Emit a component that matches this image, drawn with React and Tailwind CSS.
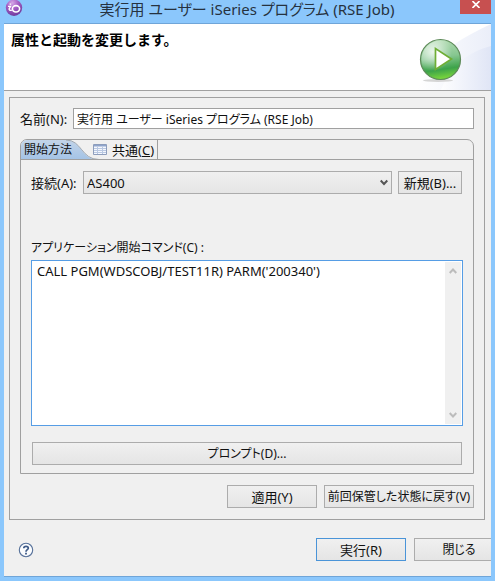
import { useState } from 'react';
import { clsx } from 'clsx';

const PushButton = ({ children, primary, className }) => (
  <button
    type="button"
    className={clsx(
      'h-[23px] shrink-0 border bg-linear-to-b from-[#f0f0f0] to-[#e5e5e5] text-center whitespace-nowrap',
      primary ? 'border-[#4a94d8]' : 'border-[#acacac]',
      className
    )}
  >
    {children}
  </button>
);

const AppIcon = () => (
  <svg className="h-[18px] w-[18px]" viewBox="0 0 18 18" aria-hidden="true">
    <defs>
      <radialGradient id="orb" cx="0.4" cy="0.2" r="0.8">
        <stop offset="0" stopColor="#d3a6e6" />
        <stop offset="0.45" stopColor="#a65fc6" />
        <stop offset="1" stopColor="#6f3a9c" />
      </radialGradient>
    </defs>
    <circle cx="9" cy="7.800" r="8.200" fill="url(#orb)" />
    <ellipse cx="11" cy="8.800" rx="3.600" ry="3.200" fill="none" stroke="#fff" strokeWidth="1.600" />
    <path d="M4.600 4.200h1.600M3 6.300h2.600L4.200 8.600c-.6 1.200 1 2.200 2.600 1.600" fill="none" stroke="#fff" strokeWidth="1.300" />
  </svg>
);

const RunIcon = () => (
  <svg className="h-[46px] w-[46px]" viewBox="0 0 46 46" aria-hidden="true">
    <defs>
      <linearGradient id="ball" x1="0.4" y1="0" x2="0.55" y2="1">
        <stop offset="0" stopColor="#b4dcb4" />
        <stop offset="0.45" stopColor="#86c690" />
        <stop offset="0.75" stopColor="#3da34a" />
        <stop offset="1" stopColor="#7fdc3a" />
      </linearGradient>
      <radialGradient id="shine" cx="0.3" cy="0.3" r="0.5">
        <stop offset="0" stopColor="#fff" stopOpacity="0.8" />
        <stop offset="1" stopColor="#fff" stopOpacity="0" />
      </radialGradient>
    </defs>
    <ellipse cx="20" cy="43.500" rx="15" ry="1.500" fill="#d5d5d5" />
    <circle cx="22.500" cy="22.500" r="20" fill="url(#ball)" stroke="#5f8a5a" strokeWidth="1.200" />
    <circle cx="22.500" cy="22.500" r="19" fill="url(#shine)" />
    <path d="M17.500 11.500v21l16-10.500z" fill="#fff" stroke="#6fae35" strokeWidth="1.700" />
  </svg>
);

const Banner = () => (
  <header className="relative flex h-[67px] items-start justify-between border-b border-[#a0a0a0] bg-white">
    <svg className="absolute right-0 top-0 h-full w-[74px]" viewBox="0 0 74 66" preserveAspectRatio="none" aria-hidden="true">
      <defs>
        <linearGradient id="sweep" x1="0" y1="0" x2="1" y2="0">
          <stop offset="0" stopColor="#fff" />
          <stop offset="1" stopColor="#dde3f5" />
        </linearGradient>
      </defs>
      <path d="M74 0C50 12 20 24 0 66h74z" fill="url(#sweep)" opacity="0.6" />
      <path d="M74 22C52 28 34 40 24 66h50z" fill="url(#sweep)" opacity="0.800" />
    </svg>
    <h1 className="pl-[7px] pt-[6px] text-[14px] leading-5 font-bold text-black [font-feature-settings:normal]">
      属性と起動を変更します。
    </h1>
    <div className="relative pr-[27px] pt-[13px]">
      <RunIcon />
    </div>
  </header>
);

const TabStrip = ({ tab, onSelect }) => (
  <div role="tablist" className="flex h-5 overflow-hidden rounded-t-[6px] border-b border-[#a0a0a0]">
    <div className="relative w-[78px]">
      <svg className="absolute inset-0 h-5 w-full" viewBox="0 0 78 20" aria-hidden="true">
        <defs>
          <linearGradient id="tab" x1="0" y1="0" x2="0" y2="1">
            <stop offset="0" stopColor="#c3d4e8" />
            <stop offset="1" stopColor="#a3c3e6" />
          </linearGradient>
        </defs>
        <path d="M0 20V0h45C61 0 60 20 78 20z" fill="url(#tab)" />
        <path d="M45 0C61 0 60 19.500 78 19.500" fill="none" stroke="#a0a8b0" />
      </svg>
      <button
        type="button"
        role="tab"
        aria-selected={tab === 'start'}
        onClick={() => onSelect('start')}
        className="relative pl-[3px] leading-5"
      >
        開始方法
      </button>
    </div>
    <button
      type="button"
      role="tab"
      aria-selected={tab === 'common'}
      onClick={() => onSelect('common')}
      className="-ml-[6px] flex items-center gap-[5px] border-r border-[#a0a0a0] pr-[3px] text-[13px] leading-5"
    >
      <svg className="h-3 w-[14px]" viewBox="0 0 14 12" aria-hidden="true">
        <path d="M.5.5h13v10H.5z" fill="#f4f7fd" stroke="#8d9dbb" />
        <path d="M1 1h12v1.500H1z" fill="#8fa5cc" />
        <path d="M1 4.500h12M1 6.500h12M1 8.500h12M4.500 3v7M9.500 3v7" stroke="#b9c8e2" />
      </svg>
      <span>
        共通(<u>C</u>)
      </span>
    </button>
  </div>
);

const ScrollRail = () => (
  <div className="m-px flex w-4 flex-col justify-between bg-[#f0f0f0] text-[#bcbcbc]">
    <button type="button" aria-label="上へスクロール" className="flex h-[18px] items-center justify-center">
      <svg className="h-[6px] w-2" viewBox="0 0 8 6">
        <path d="M.7 5L4 1.500 7.300 5" fill="none" stroke="currentColor" strokeWidth="2" />
      </svg>
    </button>
    <button type="button" aria-label="下へスクロール" className="flex h-[18px] items-center justify-center">
      <svg className="h-[6px] w-2" viewBox="0 0 8 6">
        <path d="M.7 1L4 4.500 7.300 1" fill="none" stroke="currentColor" strokeWidth="2" />
      </svg>
    </button>
  </div>
);

const App = () => {
  const [tab, setTab] = useState('start');
  const [name, setName] = useState('実行用 ユーザー iSeries プログラム (RSE Job)');
  const [command, setCommand] = useState("CALL PGM(WDSCOBJ/TEST11R) PARM('200340')");

  return (
    <div className="overflow-hidden bg-[#8bc7fc] px-1 pb-[5px] font-['Noto_Sans','Noto_Sans_CJK_JP',sans-serif] text-[12px] leading-5 text-[#111] [font-feature-settings:'palt']">
      {/* Title bar */}
      <div className="flex h-[23px] items-start justify-between">
        <div className="w-[30px] pl-px">
          <AppIcon />
        </div>
        <div className="text-[15px] leading-[19px] whitespace-nowrap text-[#26323f]">
          実行用 ユーザー iSeries プログラム (RSE Job)
        </div>
        <button type="button" aria-label="閉じる" className="flex h-[14px] w-[31px] items-start justify-center bg-[#c75050] pt-px">
          <svg className="h-[7px] w-2" viewBox="0 0 8 7">
            <path d="M.5 0l7 7M7.500 0l-7 7" stroke="#fff" strokeWidth="1.600" />
          </svg>
        </button>
      </div>

      <div className="overflow-hidden border-t border-b border-[#6fa5d8] bg-[#f0f0f0]">
        <Banner />

        <div className="mr-[6px] ml-[5px] mt-[6px] border border-[#a0a0a0] px-[10px] pt-[10px] pb-[11px]">
          <div className="flex items-center">
            <label htmlFor="name" className="w-[53px] shrink-0 text-[13px] whitespace-nowrap">
              名前(N):
            </label>
            <input
              id="name"
              value={name}
              onChange={(e) => setName(e.target.value)}
              className="h-[21px] min-w-0 flex-1 border border-[#a0a0a0] bg-white px-[3px] outline-none"
            />
          </div>

          <div className="mt-[10px] rounded-t-[7px] border border-[#a0a0a0]">
            <TabStrip tab={tab} onSelect={setTab} />

            <div className="px-[10px] pt-[11px] pb-2">
              <div className="flex items-center">
                <label htmlFor="connection" className="w-[52px] shrink-0 text-[13px] whitespace-nowrap">
                  接続(A):
                </label>
                <div className="relative flex-1">
                  <select
                    id="connection"
                    className="block h-[23px] w-full appearance-none border border-[#acacac] bg-linear-to-b from-[#f0f0f0] to-[#e5e5e5] px-[3px] text-[13px] outline-none"
                  >
                    <option>AS400</option>
                  </select>
                  <svg className="pointer-events-none absolute top-2 right-1 h-[7px] w-2" viewBox="0 0 8 7">
                    <path d="M.7 1.500L4 5l3.300-3.500" fill="none" stroke="#555" strokeWidth="2" />
                  </svg>
                </div>
                <PushButton className="mr-px ml-[6px] w-16 text-[13px]">新規(B)...</PushButton>
              </div>

              <label htmlFor="command" className="mt-[44px] block">
                アプリケーション開始コマンド(C) :
              </label>
              <div className="mt-[2px] flex h-[166px] border border-[#569de5] bg-white">
                <textarea
                  id="command"
                  value={command}
                  onChange={(e) => setCommand(e.target.value)}
                  className="min-w-0 flex-1 resize-none px-[5px] text-[13px] outline-none"
                />
                <ScrollRail />
              </div>
              <div className="mt-4 flex px-px">
                <PushButton className="flex-1">プロンプト(D)...</PushButton>
              </div>
            </div>
          </div>

          <div className="mt-[11px] flex justify-end gap-[7px]">
            <PushButton className="w-[90px] text-[13px]">適用(Y)</PushButton>
            <PushButton className="w-[150px]">前回保管した状態に戻す(V)</PushButton>
          </div>
        </div>

        {/* Footer, the last button runs past the window edge */}
        <div className="mt-[18px] -mr-[13px] mb-[15px] flex items-center gap-2 pl-[14px]">
          <button type="button" aria-label="ヘルプ" className="mr-auto">
            <svg className="h-4 w-4" viewBox="0 0 16 16">
              <circle cx="8" cy="8" r="6.700" fill="#fbfcfe" stroke="#57719a" strokeWidth="1.100" />
              <path d="M5.800 6.300C5.800 3.600 10.300 3.700 10.300 6.200 10.300 7.700 8 7.700 8 9.700" fill="none" stroke="#3f5b88" strokeWidth="1.700" />
              <path d="M7.100 10.800h1.800v1.700H7.100z" fill="#3f5b88" />
            </svg>
          </button>
          <PushButton primary className="w-[90px] text-[13px]">
            実行(R)
          </PushButton>
          <PushButton className="w-[90px]">閉じる</PushButton>
        </div>
      </div>
    </div>
  );
};

export default App;
